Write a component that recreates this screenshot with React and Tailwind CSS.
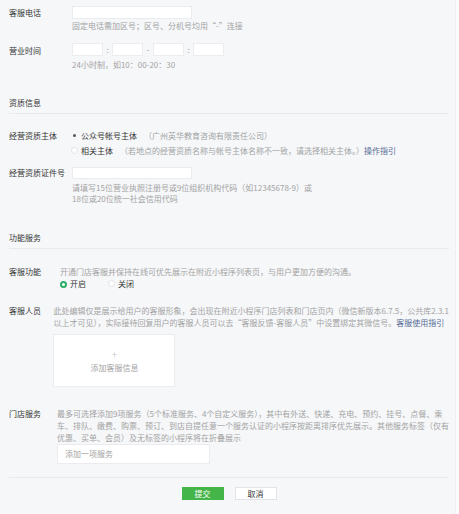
const LABEL = 'text-[#353535]';
const HINT = 'text-[#a3a3a3]';

function Input({ className = '' }) {
  return <div className={`bg-white border border-[#ececf0] ${className}`} />;
}

function Radio({ on, green }) {
  if (green) {
    return <span className="inline-block w-[7px] h-[7px] rounded-full border-2 border-[#2aae67] bg-white" />;
  }
  if (on) {
    return (
      <span className="inline-flex items-center justify-center w-[7px] h-[7px] rounded-full">
        <span className="w-[3px] h-[3px] rounded-full bg-[#555]" />
      </span>
    );
  }
  return <span className="inline-block w-[7px] h-[7px] rounded-full border border-[#e2e2e6] bg-white" />;
}

function SectionTitle({ children, className = '' }) {
  return (
    <div className={className}>
      <div className={`leading-[12px] ${LABEL}`}>{children}</div>
      <div className="mt-[4px] border-t border-[#e9eaee]" />
    </div>
  );
}

export default function App() {
  return (
    <div
      className="w-[459px] h-[514px] bg-[#f6f7f9] flex text-[8px]"
      style={{ fontFamily: '"Noto Sans CJK SC", "Noto Sans", sans-serif' }}
    >
      <div className="w-[455px] pl-[9px] pr-[6px] pt-[6px]">
        {/* 客服电话 */}
        <div className="flex">
          <div className={`w-[63px] leading-[14px] ${LABEL}`}>客服电话</div>
          <div>
            <Input className="w-[120px] h-[13px]" />
            <div className={`mt-[1px] leading-[12px] ${HINT}`}>固定电话需加区号；区号、分机号均用“-”连接</div>
          </div>
        </div>

        {/* 营业时间 */}
        <div className="flex mt-[11px]">
          <div className={`w-[63px] leading-[14px] pt-[1px] ${LABEL}`}>营业时间</div>
          <div>
            <div className="flex items-center">
              <Input className="w-[31px] h-[13px]" />
              <span className={`w-[9px] text-center ${HINT}`}>:</span>
              <Input className="w-[31px] h-[13px]" />
              <span className={`w-[10px] text-center ${HINT}`}>-</span>
              <Input className="w-[31px] h-[13px]" />
              <span className={`w-[9px] text-center ${HINT}`}>:</span>
              <Input className="w-[31px] h-[13px]" />
            </div>
            <div className={`mt-[3px] leading-[12px] ${HINT}`}>24小时制，如10：00-20：30</div>
          </div>
        </div>

        {/* 资质信息 */}
        <SectionTitle className="mt-[26px]">资质信息</SectionTitle>

        <div className="flex mt-[14px]">
          <div className={`w-[63px] leading-[15px] ${LABEL}`}>经营资质主体</div>
          <div className="leading-[15px]">
            <div className="flex items-center gap-[3px] -ml-[1px]">
              <Radio on />
              <span className={LABEL}>公众号帐号主体</span>
              <span className={`ml-[4px] ${HINT}`}>（广州英华教育咨询有限责任公司）</span>
            </div>
            <div className="flex items-center gap-[3px] -ml-[1px]">
              <Radio />
              <span className={LABEL}>相关主体</span>
              <span className={`ml-[4px] ${HINT}`}>
                （若地点的经营资质名称与帐号主体名称不一致，请选择相关主体。）
                <span className="text-[#576b95]">操作指引</span>
              </span>
            </div>
          </div>
        </div>

        <div className="flex mt-[9px]">
          <div className={`w-[63px] leading-[12px] ${LABEL}`}>经营资质证件号</div>
          <div>
            <Input className="w-[120px] h-[12px]" />
            <div className={`mt-[3px] leading-[11px] whitespace-nowrap ${HINT}`}>
              请填写15位营业执照注册号或9位组织机构代码（如12345678-9）或
              <br />
              18位或20位统一社会信用代码
            </div>
          </div>
        </div>

        {/* 功能服务 */}
        <SectionTitle className="mt-[28px]">功能服务</SectionTitle>

        <div className="flex mt-[17px]">
          <div className={`w-[51px] leading-[12px] ${LABEL}`}>客服功能</div>
          <div>
            <div className={`leading-[12px] ${HINT}`}>开通门店客服并保持在线可优先展示在附近小程序列表页，与用户更加方便的沟通。</div>
            <div className="flex items-center leading-[12px]">
              <Radio green />
              <span className={`ml-[3px] ${LABEL}`}>开启</span>
              <span className="ml-[22px]">
                <Radio />
              </span>
              <span className={`ml-[3px] ${LABEL}`}>关闭</span>
            </div>
          </div>
        </div>

        <div className="flex mt-[15px]">
          <div className={`w-[51px] leading-[12px] ${LABEL}`}>客服人员</div>
          <div>
            <div className={`leading-[12px] whitespace-nowrap ${HINT}`}>
              此处编辑仅是展示给用户的客服形象，会出现在附近小程序门店列表和门店页内（微信新版本6.7.5，公共库2.3.1
              <br />
              以上才可见），实际接待回复用户的客服人员可以去“客服反馈-客服人员”中设置绑定其微信号。
              <span className="text-[#576b95]">客服使用指引</span>
            </div>
            <div className="mt-[5px] w-[122px] h-[53px] bg-white border border-[#ececf0] flex flex-col items-center justify-center">
              <span className="text-[#c9c9cc] text-[11px] leading-[12px] font-light">+</span>
              <span className={`mt-[2px] leading-[12px] ${HINT}`}>添加客服信息</span>
            </div>
          </div>
        </div>

        <div className="flex mt-[21px]">
          <div className={`w-[51px] leading-[12px] ${LABEL}`}>门店服务</div>
          <div>
            <div className={`leading-[12px] whitespace-nowrap ${HINT}`}>
              最多可选择添加9项服务（5个标准服务、4个自定义服务），其中有外送、快递、充电、预约、挂号、点餐、乘
              <br />
              车、排队、缴费、购票、预订、到店自提任意一个服务认证的小程序按距离排序优先展示。其他服务标签（仅有
              <br />
              优惠、买单、会员）及无标签的小程序将在折叠展示
            </div>
            <div className={`w-[153px] h-[20px] bg-white border border-[#ececf0] pl-[7px] flex items-center ${HINT}`}>
              添加一项服务
            </div>
          </div>
        </div>

        <div className="mt-[13px] w-[440px] border-t border-[#e9eaee]" />

        <div className="mt-[9px] w-[440px] flex justify-center gap-[11px]">
          <button className="w-[42px] h-[13px] bg-[#44b549] text-white text-[8px] leading-[13px]">提交</button>
          <button className="w-[42px] h-[13px] bg-white border border-[#e4e4e8] text-[#353535] text-[8px] leading-[11px]">取消</button>
        </div>
      </div>
      <div className="w-[4px] h-full bg-[#fafbfc] border-l border-[#eef0f2]" />
    </div>
  );
}
